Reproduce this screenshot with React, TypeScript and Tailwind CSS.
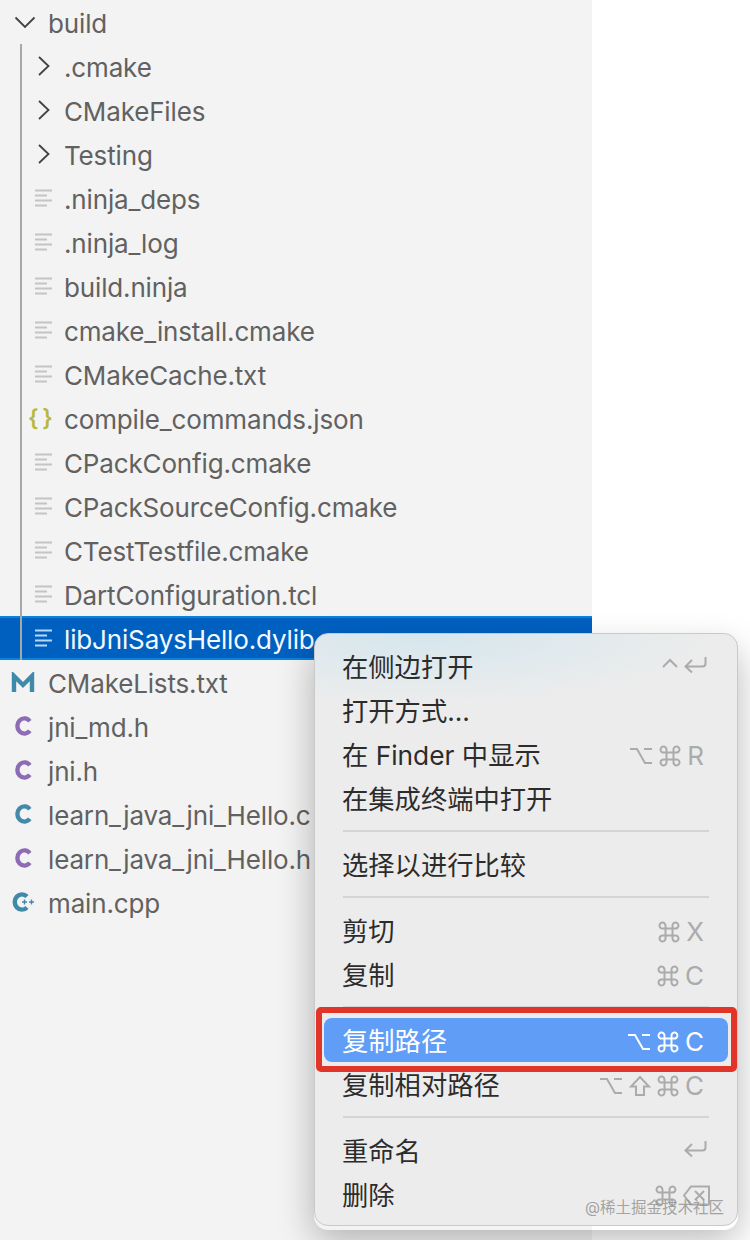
const SANS = "font-['Inter','Noto_Sans_CJK_SC',sans-serif]";

function Chevron({ down, light }: { down?: boolean; light?: boolean }) {
  return (
    <svg width="22" height="22" viewBox="0 0 22 22" fill="none" stroke={light ? "#fff" : "#424242"} strokeWidth="1.8">
      {down ? <path d="M1.5 6.5 11 16l9.500-9.500" /> : <path d="M5 2l9.500 9L5 20" />}
    </svg>
  );
}

function FileLines({ light }: { light?: boolean }) {
  const c = light ? "#b9d8f5" : "#c4c4c4";
  return (
    <svg width="18" height="18" viewBox="0 0 18 18" stroke={c} strokeWidth="1.8">
      <path d="M1 1.500h17M1 6.500h12M1 11.500h17M1 16.500h12" />
    </svg>
  );
}

function CIcon({ color }: { color: string }) {
  return (
    <svg width="18" height="20" viewBox="0 0 18 20" fill="none" stroke={color} strokeWidth="4.4">
      <path d="M15.800 5.200A7 7.600 0 1 0 15.800 14.800" />
    </svg>
  );
}

function CppIcon() {
  return (
    <svg width="24" height="20" viewBox="0 0 24 20" fill="none" stroke="#3f8aa8">
      <path d="M16 4.600A7.200 7.600 0 1 0 16 15.400" strokeWidth="4.400" />
      <path d="M11 10h5M13.500 7.500v5M18 10h5M20.500 7.500v5" strokeWidth="1.400" />
    </svg>
  );
}

function MIcon() {
  return (
    <svg width="24" height="20" viewBox="0 0 24 20" fill="none" stroke="#3f8aa8" strokeWidth="4.400">
      <path d="M3 20V4l9 9 9-9v16" />
    </svg>
  );
}

type Row = { name: string; kind: "folder" | "file" | "json" };

const buildRows: Row[] = [
  { name: ".cmake", kind: "folder" },
  { name: "CMakeFiles", kind: "folder" },
  { name: "Testing", kind: "folder" },
  { name: ".ninja_deps", kind: "file" },
  { name: ".ninja_log", kind: "file" },
  { name: "build.ninja", kind: "file" },
  { name: "cmake_install.cmake", kind: "file" },
  { name: "CMakeCache.txt", kind: "file" },
  { name: "compile_commands.json", kind: "json" },
  { name: "CPackConfig.cmake", kind: "file" },
  { name: "CPackSourceConfig.cmake", kind: "file" },
  { name: "CTestTestfile.cmake", kind: "file" },
  { name: "DartConfiguration.tcl", kind: "file" },
];

const topRows = [
  { name: "CMakeLists.txt", icon: <MIcon /> },
  { name: "jni_md.h", icon: <CIcon color="#8e6bb5" /> },
  { name: "jni.h", icon: <CIcon color="#8e6bb5" /> },
  { name: "learn_java_jni_Hello.c", icon: <CIcon color="#4589a8" /> },
  { name: "learn_java_jni_Hello.h", icon: <CIcon color="#8e6bb5" /> },
  { name: "main.cpp", icon: <CppIcon /> },
];

function BuildRow({ row }: { row: Row }) {
  return (
    <div className="flex h-11 items-center">
      <div className="flex w-[64px] shrink-0 items-center pl-[34px]">
        {row.kind === "folder" && <Chevron />}
        {row.kind === "file" && <FileLines />}
        {row.kind === "json" && (
          <span className="-ml-[6px] text-[23px] font-semibold tracking-[-1px] whitespace-pre text-[#b8b83c]">{"{ }"}</span>
        )}
      </div>
      <span className="whitespace-nowrap pt-[2px]">{row.name}</span>
    </div>
  );
}

// keys drawn as icons, like the macOS menu glyphs
function Key({ k, color }: { k: string; color: string }) {
  const p = { fill: "none", stroke: color, strokeWidth: 2 };
  if (k === "ctrl")
    return (
      <svg width="18" height="14" viewBox="0 0 18 14" {...p} className="translate-x-[2px] -translate-y-[4px]">
        <path d="M2 10 9 3l7 7" />
      </svg>
    );
  if (k === "enter")
    return (
      <svg width="24" height="18" viewBox="0 0 24 18" {...p} className="-mr-[3px] -translate-y-[3px]">
        <path d="M22.500 1v6.500a3 3 0 0 1-3 3H3M9 4l-6.500 6.500L9 16.500" />
      </svg>
    );
  if (k === "opt")
    return (
      <svg width="24" height="18" viewBox="0 0 24 18" {...p}>
        <path d="M1 2h7l8 14h7M15 2h8" />
      </svg>
    );
  if (k === "cmd")
    return (
      <svg width="22" height="22" viewBox="0 0 22 22" {...p}>
        <path d="M7.500 7.500h7v7h-7zM7.500 7.500H5a3 3 0 1 1 2.500-2.800V7.500zM14.500 7.500V5A3 3 0 1 1 17 7.500h-2.500zM14.500 14.500H17a3 3 0 1 1-2.500 2.800v-2.800zM7.500 14.500V17A3 3 0 1 1 5 14.500h2.500z" />
      </svg>
    );
  if (k === "shift")
    return (
      <svg width="22" height="22" viewBox="0 0 22 22" {...p}>
        <path d="M11 2 2 11.500h5V20h8v-8.500h5z" />
      </svg>
    );
  if (k === "del")
    return (
      <svg width="27" height="21" viewBox="0 0 27 21" {...p} className="-mr-[6px] -translate-y-[1px]">
        <path d="M8 1.500h18v18H8L1 10.500zM12 6l9 9M21 6l-9 9" />
      </svg>
    );
  return <span className="text-[26px] leading-none" style={{ color }}>{k}</span>;
}

type Item = { label: string; keys?: string[] } | "sep";

const menu: Item[] = [
  { label: "在侧边打开", keys: ["ctrl", "enter"] },
  { label: "打开方式..." },
  { label: "在 Finder 中显示", keys: ["opt", "cmd", "R"] },
  { label: "在集成终端中打开" },
  "sep",
  { label: "选择以进行比较" },
  "sep",
  { label: "剪切", keys: ["cmd", "X"] },
  { label: "复制", keys: ["cmd", "C"] },
  "sep",
  { label: "复制路径", keys: ["opt", "cmd", "C"] },
  { label: "复制相对路径", keys: ["opt", "shift", "cmd", "C"] },
  "sep",
  { label: "重命名", keys: ["enter"] },
  { label: "删除", keys: ["cmd", "del"] },
];

function Menu() {
  return (
    <div className="absolute left-[314px] top-[633px] h-[593px] w-[424px] overflow-hidden rounded-[14px] border border-[#c9c9c9] bg-[radial-gradient(ellipse_290px_70px_at_110px_0px,#d5e6ee_0%,#e2eaed_55%,#ececec_100%)] px-[9px] py-[10px] text-[26.3px] tracking-normal text-[#2c2c2c]">
      {menu.map((item, i) =>
        item === "sep" ? (
          <div key={i} className="flex h-[22px] items-center px-[19px]">
            <div className="h-[2px] w-full bg-[#d4d4d4]" />
          </div>
        ) : (
          <div
            key={i}
            className={
              "flex h-11 items-center justify-between rounded-lg pl-[18px] pr-[24px] pt-[4px] " +
              (item.label === "复制路径" ? "bg-[#5f9df6] text-white" : "")
            }
          >
            <span className="whitespace-nowrap">{item.label}</span>
            <span className="flex items-center gap-[6px]">
              {item.keys?.map((k) => (
                <Key key={k} k={k} color={item.label === "复制路径" ? "#ffffff" : "#ababab"} />
              ))}
            </span>
          </div>
        )
      )}
    </div>
  );
}

export default function App() {
  return (
    <div className={"relative h-[1240px] w-[750px] overflow-hidden bg-white text-[26px] tracking-[-0.15px] text-[#616161] " + SANS}>
      <div className="h-full w-[592px] bg-[#f3f3f3]">
        <div className="flex h-11 items-center pl-[14px]">
          <div className="w-[34px]">
            <Chevron down />
          </div>
          <span className="pt-[2px]">build</span>
        </div>

        <div className="relative">
          {buildRows.map((r) => (
            <BuildRow key={r.name} row={r} />
          ))}
          <div className="flex h-11 items-center border-y-2 border-y-[#0a82df] bg-[#0060c0] text-[#f4f9ff]">
            <div className="w-[34px] shrink-0" />
            <div className="w-[30px] shrink-0">
              <FileLines light />
            </div>
            <span className="pt-[2px]">libJniSaysHello.dylib</span>
          </div>
          <div className="absolute bottom-0 left-[20px] top-0 w-[2px] bg-[#a8a8a8]" />
        </div>

        {topRows.map((r) => (
          <div key={r.name} className="flex h-11 items-center">
            <div className="flex w-[48px] shrink-0 justify-center pl-[5px] pr-[7px]">{r.icon}</div>
            <span className="whitespace-nowrap pt-[2px]">{r.name}</span>
          </div>
        ))}
      </div>

      <div className="absolute left-[314px] top-[640px] h-[590px] w-[424px] rounded-[14px] shadow-[0_10px_36px_rgba(0,0,0,0.28)]" />
      <Menu />

      {/* annotation round the highlighted item */}
      <div className="absolute left-[316px] top-[1007px] h-[65px] w-[421px] rounded-[5px] border-[6px] border-[#e1352a]" />

      <div className="absolute left-[585px] top-[1196px] text-[15.5px] tracking-normal text-[#8f8f8f]/80">@稀土掘金技术社区</div>
    </div>
  );
}
